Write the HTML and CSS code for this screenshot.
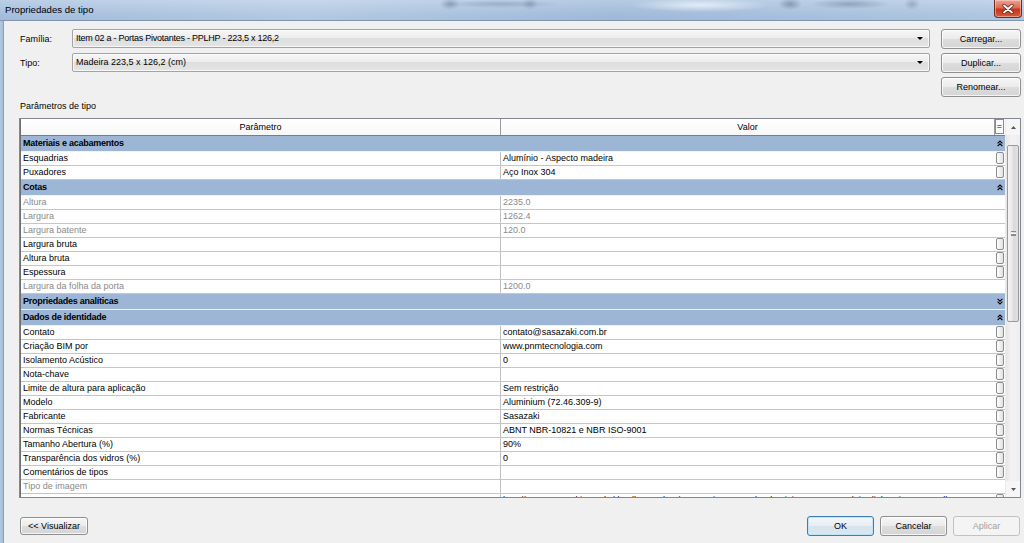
FILE: index.html
```html
<!DOCTYPE html>
<html lang="pt">
<head>
<meta charset="utf-8">
<title>Propriedades de tipo</title>
<link rel="stylesheet" href="styles.css">
</head>
<body>
<div class="window">
  <div class="titlebar">
    <span class="title">Propriedades de tipo</span>
    <div class="close"><svg width="12" height="10" viewBox="0 0 12 10"><path d="M2 1.5 L10 8.5 M10 1.5 L2 8.5" stroke="#5a1a12" stroke-width="3.2" stroke-linecap="round"/><path d="M2 1.5 L10 8.5 M10 1.5 L2 8.5" stroke="#fff" stroke-width="1.8" stroke-linecap="round"/></svg></div>
  </div>
  <div class="main">
    <div class="frame"></div>
    <div class="content">
      <div class="top">
        <div class="lbl">Família:</div>
        <div class="combo"><span class="tight">Item 02 a - Portas Pivotantes - PPLHP - 223,5 x 126,2</span><i class="arrow"></i></div>
        <div class="btn">Carregar...</div>
        <div class="lbl">Tipo:</div>
        <div class="combo"><span>Madeira 223,5 x 126,2 (cm)</span><i class="arrow"></i></div>
        <div class="btn">Duplicar...</div>
        <div class="btn r3">Renomear...</div>
      </div>
      <div class="section-label">Parâmetros de tipo</div>
      <div class="grid-wrap">
        <div class="grid">
          <div class="row head"><div class="c1">Parâmetro</div><div class="c2">Valor</div><div class="c3"><span class="eq">=</span></div></div>

          <div class="row group"><div class="g">Materiais e acabamentos</div><div class="c3"><svg class="chev" viewBox="0 0 6 7"><path d="M0.6 3.4 L3 1 L5.4 3.4 M0.6 6.2 L3 3.8 L5.4 6.2" fill="none" stroke="#000" stroke-width="1.1"/></svg></div></div>
          <div class="row"><div class="c1">Esquadrias</div><div class="c2">Alumínio - Aspecto madeira</div><div class="c3"><b class="eb"></b></div></div>
          <div class="row"><div class="c1">Puxadores</div><div class="c2">Aço Inox 304</div><div class="c3"><b class="eb"></b></div></div>

          <div class="row group"><div class="g">Cotas</div><div class="c3"><svg class="chev" viewBox="0 0 6 7"><path d="M0.6 3.4 L3 1 L5.4 3.4 M0.6 6.2 L3 3.8 L5.4 6.2" fill="none" stroke="#000" stroke-width="1.1"/></svg></div></div>
          <div class="row ro"><div class="c1">Altura</div><div class="c2">2235.0</div><div class="c3"></div></div>
          <div class="row ro"><div class="c1">Largura</div><div class="c2">1262.4</div><div class="c3"></div></div>
          <div class="row ro"><div class="c1">Largura batente</div><div class="c2">120.0</div><div class="c3"></div></div>
          <div class="row"><div class="c1">Largura bruta</div><div class="c2"></div><div class="c3"><b class="eb"></b></div></div>
          <div class="row"><div class="c1">Altura bruta</div><div class="c2"></div><div class="c3"><b class="eb"></b></div></div>
          <div class="row"><div class="c1">Espessura</div><div class="c2"></div><div class="c3"><b class="eb"></b></div></div>
          <div class="row ro"><div class="c1">Largura da folha da porta</div><div class="c2">1200.0</div><div class="c3"></div></div>

          <div class="row group"><div class="g">Propriedades analíticas</div><div class="c3"><svg class="chev" viewBox="0 0 6 7"><path d="M0.6 0.8 L3 3.2 L5.4 0.8 M0.6 3.6 L3 6 L5.4 3.6" fill="none" stroke="#000" stroke-width="1.1"/></svg></div></div>

          <div class="row group"><div class="g">Dados de identidade</div><div class="c3"><svg class="chev" viewBox="0 0 6 7"><path d="M0.6 3.4 L3 1 L5.4 3.4 M0.6 6.2 L3 3.8 L5.4 6.2" fill="none" stroke="#000" stroke-width="1.1"/></svg></div></div>
          <div class="row"><div class="c1">Contato</div><div class="c2">contato@sasazaki.com.br</div><div class="c3"><b class="eb"></b></div></div>
          <div class="row"><div class="c1">Criação BIM por</div><div class="c2">www.pnmtecnologia.com</div><div class="c3"><b class="eb"></b></div></div>
          <div class="row"><div class="c1">Isolamento Acústico</div><div class="c2">0</div><div class="c3"><b class="eb"></b></div></div>
          <div class="row"><div class="c1">Nota-chave</div><div class="c2"></div><div class="c3"><b class="eb"></b></div></div>
          <div class="row"><div class="c1">Limite de altura para aplicação</div><div class="c2">Sem restrição</div><div class="c3"><b class="eb"></b></div></div>
          <div class="row"><div class="c1">Modelo</div><div class="c2">Aluminium (72.46.309-9)</div><div class="c3"><b class="eb"></b></div></div>
          <div class="row"><div class="c1">Fabricante</div><div class="c2">Sasazaki</div><div class="c3"><b class="eb"></b></div></div>
          <div class="row"><div class="c1">Normas Técnicas</div><div class="c2">ABNT NBR-10821 e NBR ISO-9001</div><div class="c3"><b class="eb"></b></div></div>
          <div class="row"><div class="c1">Tamanho Abertura (%)</div><div class="c2">90%</div><div class="c3"><b class="eb"></b></div></div>
          <div class="row"><div class="c1">Transparência dos vidros (%)</div><div class="c2">0</div><div class="c3"><b class="eb"></b></div></div>
          <div class="row"><div class="c1">Comentários de tipos</div><div class="c2"></div><div class="c3"><b class="eb"></b></div></div>
          <div class="row ro"><div class="c1">Tipo de imagem</div><div class="c2"></div><div class="c3"></div></div>
          <div class="row"><div class="c1">URL</div><div class="c2">http://www.sasazaki.com.br/detalhe-produto/portas-pivotantes-de-aluminio-aspecto-madeira-linha-pivotante-pplhp-223-5-x-126-2</div><div class="c3"><b class="eb"></b></div></div>
        </div>
        <div class="vscroll">
          <div class="sb-btn"><svg width="5" height="3" viewBox="0 0 5 3"><path d="M0 3 L2.5 0 L5 3 Z" fill="#555"/></svg></div>
          <div class="sb-track"><div class="thumb"><i></i></div></div>
          <div class="sb-btn"><svg width="5" height="3" viewBox="0 0 5 3"><path d="M0 0 L2.5 3 L5 0 Z" fill="#555"/></svg></div>
        </div>
      </div>
      <div class="footer">
        <div class="btn vis">&lt;&lt; Visualizar</div>
        <div class="spacer"></div>
        <div class="btn ok">OK</div>
        <div class="btn fb">Cancelar</div>
        <div class="btn fb dis">Aplicar</div>
      </div>
    </div>
  </div>
</div>
</body>
</html>
```

FILE: styles.css
```css
* { box-sizing: border-box; }
html, body { margin: 0; padding: 0; }
body {
  width: 1024px;
  height: 543px;
  overflow: hidden;
  font-family: "Liberation Sans", Arial, sans-serif;
  font-size: 9px;
  color: #000;
  background: #f0f0f0;
}
.window { display: flex; flex-direction: column; height: 543px; }

.titlebar {
  height: 21px;
  flex: none;
  display: flex;
  align-items: flex-start;
  border-bottom: 1px solid #7f94ae;
  background:
    radial-gradient(ellipse 70px 7px at 700px 5px, rgba(236,243,251,0.85), rgba(236,243,251,0) 100%),
    radial-gradient(ellipse 10px 6px at 450px 4px, rgba(70,95,130,0.4), rgba(70,95,130,0) 100%),
    radial-gradient(ellipse 8px 6px at 530px 4px, rgba(70,95,130,0.3), rgba(70,95,130,0) 100%),
    radial-gradient(ellipse 60px 4px at 500px 4px, rgba(90,110,140,0.3), rgba(90,110,140,0) 100%),
    radial-gradient(ellipse 12px 6px at 790px 4px, rgba(60,80,110,0.4), rgba(60,80,110,0) 100%),
    radial-gradient(ellipse 40px 5px at 850px 4px, rgba(70,90,120,0.35), rgba(70,90,120,0) 100%),
    radial-gradient(ellipse 8px 6px at 912px 4px, rgba(70,90,120,0.3), rgba(70,90,120,0) 100%),
    linear-gradient(to right, rgba(160,186,218,0.3), rgba(200,216,236,0.4) 30%, rgba(150,178,212,0.35) 60%, rgba(190,210,232,0.4)),
    linear-gradient(#c6d7eb, #a9c1dd 70%, #a3bbd8);
}
.title { padding: 4px 0 0 5px; font-size: 9.6px; color: #000; }
.close {
  margin-left: auto;
  margin-right: 2px;
  width: 28px;
  height: 18px;
  border: 1px solid #6e2a20;
  border-top: none;
  border-radius: 0 0 4px 4px;
  background: linear-gradient(#eba493, #dc6a52 45%, #c83519 55%, #d65a3a);
  box-shadow: inset 0 0 0 1px rgba(255,220,210,0.5);
  display: flex;
  align-items: center;
  justify-content: center;
}

.main { flex: 1; display: flex; }
.frame {
  width: 4px;
  flex: none;
  background: linear-gradient(to right, #b3c8e2, #a6bedb 75%, #8d9db3 75%);
}
.content { flex: 1; padding: 8px 3px 0 15px; display: flex; flex-direction: column; }

.top {
  display: grid;
  grid-template-columns: 53px 1fr 80px;
  grid-template-rows: 20px 20px 20px;
  row-gap: 4px;
}
.lbl { align-self: center; padding-left: 1px; padding-bottom: 1px; }
.combo {
  height: 19px;
  margin-right: 11px;
  border: 1px solid #a3a3a3;
  border-radius: 2px;
  background: linear-gradient(#f6f6f6, #ececec 50%, #dedede 50%, #e4e4e4);
  box-shadow: inset 0 0 0 1px rgba(255,255,255,0.7);
  display: flex;
  align-items: center;
  padding: 0 6px 1px 3px;
}
.combo span { flex: 1; white-space: nowrap; }
.combo .tight { letter-spacing: -0.25px; }
.arrow {
  width: 0; height: 0;
  border-left: 3px solid transparent;
  border-right: 3px solid transparent;
  border-top: 3px solid #000;
  margin-top: 1px;
}
.btn {
  height: 20px;
  border: 1px solid #8f8f8f;
  border-radius: 3px;
  background: linear-gradient(#f6f6f6, #ebebeb 50%, #dddddd 50%, #d5d5d5);
  box-shadow: inset 0 0 0 1px rgba(255,255,255,0.75);
  display: flex;
  align-items: center;
  justify-content: center;
  padding-bottom: 1px;
  white-space: nowrap;
}
.r3 { grid-column: 3; grid-row: 3; }

.section-label { margin-top: 3px; height: 12px; line-height: 12px; padding-left: 1px; }

.grid-wrap {
  margin-top: 6px;
  height: 380px;
  border: 1px solid #828790;
  background: #fff;
  display: flex;
}
.grid { flex: 1; overflow: hidden; border-left: 1px solid #6f6f6f; }
.row {
  display: grid;
  grid-template-columns: 480px 1fr 10px;
  height: 14px;
  line-height: 13px;
  border-bottom: 1px solid #c6c6c6;
  white-space: nowrap;
}
.row .c1 { padding-left: 2px; border-right: 1px solid #c0c0c0; overflow: hidden; }
.row .c2 { padding-left: 2px; overflow: hidden; }
.row .c3 { position: relative; }
.row.ro { color: #8a8a8a; }
.row.head {
  height: 17px;
  line-height: 16px;
  border-bottom: 1px solid #7d7d7d;
  background: linear-gradient(#ffffff, #f7f7f7);
}
.row.head .c1, .row.head .c2 { text-align: center; border-right: 1px solid #9a9a9a; padding-left: 0; }
.eq {
  display: block;
  width: 9px;
  height: 15px;
  margin-top: 0;
  border: 1px solid #8a8a8a;
  background: #fafafa;
  text-align: center;
  line-height: 12px;
  font-size: 9px;
}
.row.group {
  grid-template-columns: 1fr 10px;
  height: 16px;
  line-height: 15px;
  background: #9db6d6;
  border-bottom: 1px solid #eef3f9;
  font-weight: bold;
  letter-spacing: -0.25px;
}
.row.group .g { padding-left: 2px; }
.chev { width: 6px; height: 7px; display: block; margin: 4px 0 0 2px; }
.eb {
  display: block;
  width: 8px;
  height: 12px;
  margin: 0 0 0 1px;
  border: 1px solid #8c8c8c;
  border-radius: 2px;
  background: linear-gradient(to right, #fdfdfd, #e2e2e2);
}

.vscroll {
  width: 15px;
  flex: none;
  display: flex;
  flex-direction: column;
  background: linear-gradient(to right, #e6e6e6, #f3f3f3 40%, #ededed);
  border-left: 1px solid #ececec;
}
.sb-btn { height: 16px; display: flex; align-items: center; justify-content: center; background: #f6f6f6; }
.sb-track { flex: 1; padding: 10px 1px 0 1px; }
.thumb {
  height: 177px;
  border: 1px solid #9a9a9a;
  border-radius: 2px;
  background: linear-gradient(to right, #f4f4f4, #e6e6e6 50%, #d9d9d9 50%, #e0e0e0);
  display: flex;
  align-items: center;
  justify-content: center;
}
.thumb i {
  display: block;
  width: 5px;
  height: 5px;
  border-top: 1px solid #8a8a8a;
  border-bottom: 1px solid #8a8a8a;
  background: linear-gradient(#fff 0 1px, #8a8a8a 1px 2px, transparent 2px);
  background-position: 0 1px;
  background-repeat: no-repeat;
}

.footer {
  margin-top: 18px;
  display: flex;
  align-items: center;
  gap: 6px;
  padding-right: 1px;
}
.footer .spacer { flex: 1; }
.vis { width: 68px; height: 18px; margin-left: 1px; }
.ok {
  width: 67px;
  border-color: #3c7fb1;
  background: linear-gradient(#f2f7fa, #e6eef3 50%, #d7e3ea 50%, #dce8ef);
  box-shadow: inset 0 0 0 1px #bfe3f6;
}
.fb { width: 67px; }
.dis {
  color: #a0a0a0;
  border-color: #c2c2c2;
  background: #f4f4f4;
  box-shadow: none;
}
```
